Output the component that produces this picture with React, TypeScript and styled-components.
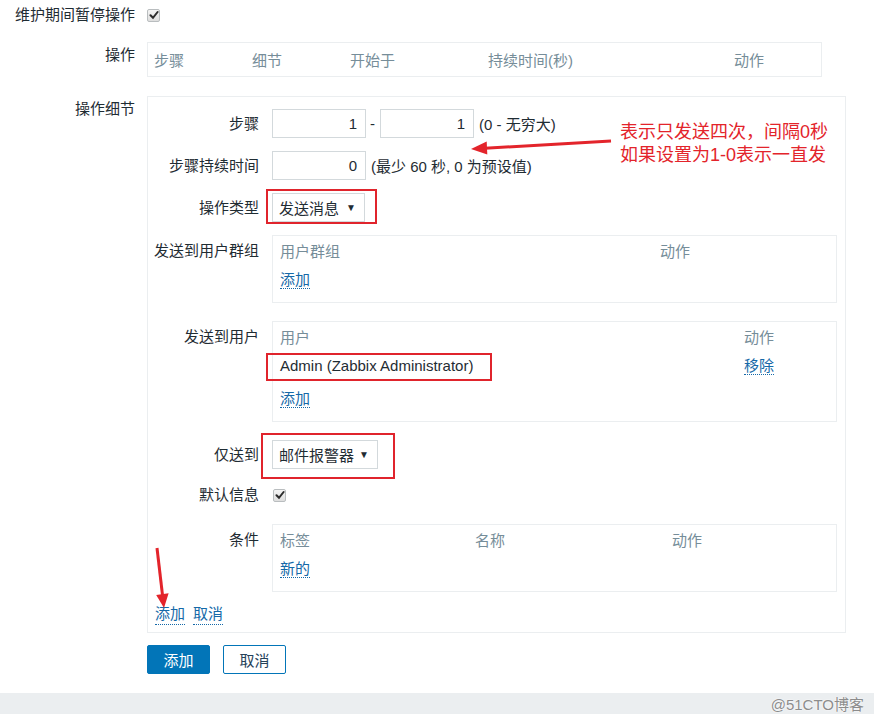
import React from "react";
import styled, { createGlobalStyle } from "styled-components";

const GlobalStyle = createGlobalStyle`
  html, body {
    margin: 0;
    padding: 0;
    background: #fff;
  }
  body {
    font-family: "Liberation Sans", Arial, "Noto Sans CJK SC", sans-serif;
    font-size: 15px;
    color: #1f2c33;
  }
`;

const Page = styled.div`
  position: relative;
  width: 874px;
  height: 714px;
  display: flex;
  flex-direction: column;
  overflow: hidden;
`;

const Content = styled.div`
  flex: 1;
`;

const FormRow = styled.div<{ $top?: number; $center?: boolean; $height?: number }>`
  display: grid;
  grid-template-columns: 135px 1fr;
  column-gap: 12px;
  margin-top: ${(p) => p.$top || 0}px;
  align-items: ${(p) => (p.$center ? "center" : "start")};
  height: ${(p) => (p.$height ? `${p.$height}px` : "auto")};
`;

const FormLabel = styled.div<{ $lh?: number }>`
  text-align: right;
  line-height: ${(p) => p.$lh || 26}px;
  white-space: nowrap;
`;

const TableBox = styled.div<{ $width?: number; $padX?: number; $padTop?: number; $padBottom?: number }>`
  box-sizing: border-box;
  width: ${(p) => (p.$width ? `${p.$width}px` : "auto")};
  border: 1px solid #ebeef0;
  padding: ${(p) => p.$padTop ?? 2}px ${(p) => p.$padX ?? 7}px ${(p) => p.$padBottom ?? 8}px;
`;

const TableRow = styled.div<{ $cols: string; $padBottom?: number }>`
  display: grid;
  grid-template-columns: ${(p) => p.$cols};
  line-height: 28px;
  padding-bottom: ${(p) => p.$padBottom || 0}px;
  white-space: nowrap;
`;

const HeadCell = styled.div`
  color: #768d99;
`;

const Cell = styled.div``;

const Link = styled.a`
  color: #1569a8;
  text-decoration: none;
  border-bottom: 1px dotted #1569a8;
  cursor: pointer;
`;

const DetailsBox = styled.div`
  box-sizing: border-box;
  width: 699px;
  border: 1px solid #ebeef0;
  padding: 12px 8px 7px 0;
`;

const InnerRow = styled.div<{ $top?: number; $center?: boolean; $height?: number }>`
  display: grid;
  grid-template-columns: 111px 1fr;
  column-gap: 13px;
  margin-top: ${(p) => p.$top || 0}px;
  align-items: ${(p) => (p.$center ? "center" : "start")};
  height: ${(p) => (p.$height ? `${p.$height}px` : "auto")};
`;

const InnerLabel = styled.div<{ $lh?: number; $pt?: number }>`
  text-align: right;
  line-height: ${(p) => p.$lh || 29}px;
  padding-top: ${(p) => p.$pt || 0}px;
  white-space: nowrap;
`;

const Inline = styled.div`
  display: flex;
  align-items: center;
  height: 29px;
  white-space: nowrap;
`;

const NumInput = styled.div`
  box-sizing: border-box;
  width: 94px;
  height: 29px;
  border: 1px solid #d3d9dc;
  background: #fff;
  text-align: right;
  padding-right: 8px;
  line-height: 27px;
`;

const Dash = styled.span`
  margin: 0 5px 0 4px;
`;

const Hint = styled.span`
  margin-left: 5px;
`;

const Select = styled.div<{ $width: number }>`
  box-sizing: border-box;
  display: inline-flex;
  align-items: center;
  justify-content: space-between;
  width: ${(p) => p.$width}px;
  height: 29px;
  border: 1px solid #d3d9dc;
  background: #fff;
  padding: 0 8px 0 6px;
  white-space: nowrap;
`;

const Caret = styled.span`
  font-size: 10px;
  color: #1f2c33;
`;

const Marked = styled.span`
  position: relative;
  display: inline-flex;
`;

const Highlight = styled.span<{ $t: number; $r: number; $b: number; $l: number }>`
  position: absolute;
  top: ${(p) => p.$t}px;
  right: ${(p) => p.$r}px;
  bottom: ${(p) => p.$b}px;
  left: ${(p) => p.$l}px;
  border: 2px solid #e0242c;
  pointer-events: none;
`;

const CheckBox = styled.span`
  box-sizing: border-box;
  display: inline-flex;
  align-items: center;
  justify-content: center;
  width: 13px;
  height: 13px;
  border: 1px solid #b9bdbf;
  border-radius: 2px;
  background: linear-gradient(#f4f4f4, #dedede);
`;

const CheckCell = styled.div<{ $indent?: number }>`
  display: flex;
  padding-left: ${(p) => p.$indent || 0}px;
`;

const LinkRow = styled.div`
  display: flex;
  gap: 8px;
  margin-top: 12px;
  padding-left: 7px;
  line-height: 20px;
`;

const Buttons = styled.div`
  display: flex;
  gap: 13px;
`;

const Button = styled.button<{ $primary?: boolean }>`
  box-sizing: border-box;
  width: 63px;
  height: 29px;
  border-radius: 2px;
  font-family: inherit;
  font-size: 15px;
  padding: 0;
  border: 1px solid #0275b8;
  background: ${(p) => (p.$primary ? "#0275b8" : "#fff")};
  color: ${(p) => (p.$primary ? "#fff" : "#25425a")};
`;

const Footer = styled.footer`
  height: 21px;
  background: #ebeef0;
  display: flex;
  justify-content: flex-end;
  align-items: center;
  padding-right: 10px;
`;

const Watermark = styled.span`
  font-size: 15px;
  color: #8c8c8c;
  text-shadow: 0 0 2px #fff, 0 0 1px #fff;
  font-family: "Liberation Sans", "Noto Sans CJK SC", sans-serif;
`;

const Note = styled.div`
  position: absolute;
  left: 620px;
  top: 121px;
  color: #e3242b;
  font-family: "Liberation Sans", "Noto Sans CJK SC", sans-serif;
  font-size: 18px;
  pointer-events: none;
`;

const NoteLine = styled.div`
  height: 23px;
  line-height: 23px;
  white-space: nowrap;
`;

const Overlay = styled.svg`
  position: absolute;
  left: 0;
  top: 0;
  pointer-events: none;
`;

const Check = () => (
  <CheckBox>
    <svg width="10" height="10" viewBox="0 0 10 10">
      <path d="M1.5 5.2 L4 7.8 L8.6 2" fill="none" stroke="#2b2b2b" strokeWidth="2" strokeLinecap="round" />
    </svg>
  </CheckBox>
);

export default function App() {
  return (
    <Page>
      <GlobalStyle />
      <Content>
        <FormRow $center $height={30}>
          <FormLabel>维护期间暂停操作</FormLabel>
          <CheckCell>
            <Check />
          </CheckCell>
        </FormRow>

        <FormRow $top={12}>
          <FormLabel>操作</FormLabel>
          <TableBox $width={675} $padX={6} $padTop={4} $padBottom={1}>
            <TableRow $cols="98px 98px 138px 246px 1fr">
              <HeadCell>步骤</HeadCell>
              <HeadCell>细节</HeadCell>
              <HeadCell>开始于</HeadCell>
              <HeadCell>持续时间(秒)</HeadCell>
              <HeadCell>动作</HeadCell>
            </TableRow>
          </TableBox>
        </FormRow>

        <FormRow $top={19}>
          <FormLabel>操作细节</FormLabel>
          <DetailsBox>
            <InnerRow>
              <InnerLabel>步骤</InnerLabel>
              <Inline>
                <NumInput>1</NumInput>
                <Dash>-</Dash>
                <NumInput>1</NumInput>
                <Hint>(0 - 无穷大)</Hint>
              </Inline>
            </InnerRow>

            <InnerRow $top={13}>
              <InnerLabel>步骤持续时间</InnerLabel>
              <Inline>
                <NumInput>0</NumInput>
                <Hint>(最少 60 秒, 0 为预设值)</Hint>
              </Inline>
            </InnerRow>

            <InnerRow $top={13}>
              <InnerLabel>操作类型</InnerLabel>
              <Inline>
                <Marked>
                  <Select $width={93}>
                    发送消息<Caret>▼</Caret>
                  </Select>
                  <Highlight $t={-4} $r={-12} $b={-2} $l={-6} />
                </Marked>
              </Inline>
            </InnerRow>

            <InnerRow $top={13}>
              <InnerLabel $pt={1}>发送到用户群组</InnerLabel>
              <TableBox>
                <TableRow $cols="380px 1fr">
                  <HeadCell>用户群组</HeadCell>
                  <HeadCell>动作</HeadCell>
                </TableRow>
                <TableRow $cols="1fr">
                  <Cell>
                    <Link>添加</Link>
                  </Cell>
                </TableRow>
              </TableBox>
            </InnerRow>

            <InnerRow $top={18}>
              <InnerLabel $pt={1}>发送到用户</InnerLabel>
              <TableBox>
                <TableRow $cols="464px 1fr">
                  <HeadCell>用户</HeadCell>
                  <HeadCell>动作</HeadCell>
                </TableRow>
                <TableRow $cols="464px 1fr" $padBottom={5}>
                  <Cell>
                    <Marked>
                      Admin (Zabbix Administrator)
                      <Highlight $t={1} $r={-19} $b={-1} $l={-14} />
                    </Marked>
                  </Cell>
                  <Cell>
                    <Link>移除</Link>
                  </Cell>
                </TableRow>
                <TableRow $cols="1fr">
                  <Cell>
                    <Link>添加</Link>
                  </Cell>
                </TableRow>
              </TableBox>
            </InnerRow>

            <InnerRow $top={18}>
              <InnerLabel>仅送到</InnerLabel>
              <Inline>
                <Marked>
                  <Select $width={106}>
                    邮件报警器<Caret>▼</Caret>
                  </Select>
                  <Highlight $t={-7} $r={-17} $b={-10} $l={-11} />
                </Marked>
              </Inline>
            </InnerRow>

            <InnerRow $top={13} $center $height={26}>
              <InnerLabel $lh={26}>默认信息</InnerLabel>
              <CheckCell $indent={1}>
                <Check />
              </CheckCell>
            </InnerRow>

            <InnerRow $top={16}>
              <InnerLabel $pt={1}>条件</InnerLabel>
              <TableBox>
                <TableRow $cols="195px 197px 1fr">
                  <HeadCell>标签</HeadCell>
                  <HeadCell>名称</HeadCell>
                  <HeadCell>动作</HeadCell>
                </TableRow>
                <TableRow $cols="1fr">
                  <Cell>
                    <Link>新的</Link>
                  </Cell>
                </TableRow>
              </TableBox>
            </InnerRow>

            <LinkRow>
              <Link>添加</Link>
              <Link>取消</Link>
            </LinkRow>
          </DetailsBox>
        </FormRow>

        <FormRow $top={12}>
          <div />
          <Buttons>
            <Button $primary>添加</Button>
            <Button>取消</Button>
          </Buttons>
        </FormRow>
      </Content>

      <Footer>
        <Watermark>@51CTO博客</Watermark>
      </Footer>

      <Note>
        <NoteLine>表示只发送四次，间隔0秒</NoteLine>
        <NoteLine>如果设置为1-0表示一直发</NoteLine>
      </Note>

      <Overlay width="874" height="714" viewBox="0 0 874 714">
        <g fill="#e3242b" stroke="#e3242b">
          <line x1="611" y1="141" x2="485" y2="148.2" strokeWidth="3" />
          <polygon points="471,149 487.3,154.6 486.7,141.6" stroke="none" />
          <line x1="157" y1="548" x2="162.6" y2="596" strokeWidth="3" />
          <polygon points="164,608 168.6,593.3 156.2,594.9" stroke="none" />
        </g>
      </Overlay>
    </Page>
  );
}
